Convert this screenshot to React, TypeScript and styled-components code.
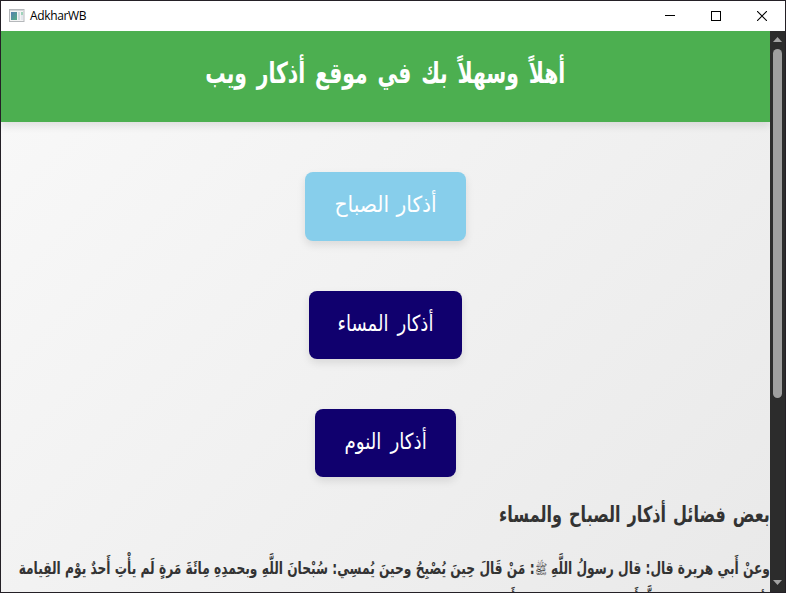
import React from "react";
import styled, { createGlobalStyle } from "styled-components";

const GlobalStyle = createGlobalStyle`
  * { box-sizing: border-box; }
  body { margin: 0; overflow: hidden; }
`;

const Window = styled.div`
  width: 786px;
  height: 593px;
  display: flex;
  flex-direction: column;
  border: 1px solid #242026;
  overflow: hidden;
  background: #fff;
`;

const TitleBar = styled.div`
  height: 30px;
  flex: none;
  display: flex;
  align-items: center;
  justify-content: space-between;
  background: #fff;
`;

const AppName = styled.div`
  display: flex;
  align-items: center;
  gap: 5px;
  padding-left: 8px;
  font: 12px/16px "Open Sans", "Noto Sans", sans-serif;
  letter-spacing: -0.35px;
  color: #000;
`;

const Controls = styled.div`
  display: flex;
  height: 30px;
`;

const Control = styled.div`
  width: 46px;
  display: flex;
  align-items: center;
  justify-content: center;
`;

const Body = styled.div`
  flex: 1;
  min-height: 0;
  display: flex;
`;

const Page = styled.main`
  width: 769px;
  flex: none;
  overflow: hidden;
  color: #333;
  font-family: "DejaVu Sans", sans-serif;
  background: linear-gradient(135deg, #f9f9f9, #e9e9e9);
`;

const Header = styled.header`
  height: 91px;
  display: flex;
  justify-content: center;
  padding-top: 20px;
  background: #4caf50;
  color: #fff;
  box-shadow: 0 4px 8px rgba(0, 0, 0, 0.1);
`;

const Line = styled.span<{ $size: number; $stretch?: number; $origin?: string; $gap?: number }>`
  display: block;
  width: max-content;
  font-size: ${(p) => p.$size}px;
  line-height: 44px;
  white-space: nowrap;
  word-spacing: ${(p) => p.$gap ?? 0}px;
  transform: scaleX(${(p) => p.$stretch ?? 1});
  transform-origin: ${(p) => p.$origin ?? "center"};
`;

const Title = styled.h1`
  margin: 0;
  font-weight: 700;
`;

const Nav = styled.nav`
  display: flex;
  flex-direction: column;
  align-items: center;
  gap: 50px;
  padding-top: 50px;
`;

const NavButton = styled.a<{ $width: number; $height: number; $color: string }>`
  width: ${(p) => p.$width}px;
  height: ${(p) => p.$height}px;
  display: flex;
  justify-content: center;
  padding-top: 11px;
  border-radius: 8px;
  background: ${(p) => p.$color};
  color: #fff;
  box-shadow: 0 4px 8px rgba(0, 0, 0, 0.1);
`;

const Section = styled.section`
  padding-top: 16px;
`;

const Heading = styled.h2`
  margin: 0;
  font-weight: 700;
`;

const Hadith = styled.p`
  margin: 15px 0 0;
  font-weight: 700;
`;

const HadithLine = styled(Line)`
  line-height: 32px;
`;

const Honorific = styled.span`
  font-size: 14px;
  font-weight: 400;
  line-height: 1;
`;

const ScrollBar = styled.div`
  width: 15px;
  flex: none;
  display: flex;
  flex-direction: column;
  align-items: center;
  justify-content: space-between;
  background: #2c2c2c;
`;

const Thumb = styled.div`
  width: 9px;
  height: 349px;
  margin-bottom: auto;
  border-radius: 5px;
  background: #9f9f9f;
`;

const Arrow = styled.svg`
  flex: none;
  display: block;
`;

export default function App() {
  return (
    <Window>
      <GlobalStyle />
      <TitleBar>
        <AppName>
          <svg width="16" height="16" viewBox="0 0 16 16">
            <defs>
              <linearGradient id="pane" x1="0" y1="0" x2="1" y2="1">
                <stop offset="0" stopColor="#547fb0" />
                <stop offset="1" stopColor="#55ad83" />
              </linearGradient>
            </defs>
            <rect x="0.5" y="1.5" width="14.5" height="12" fill="#f4f4f4" stroke="#b5b8bb" />
            <path d="M1 2.5h14" stroke="#d2d5d7" />
            <rect x="2" y="4" width="6" height="8" fill="url(#pane)" />
            <rect x="9" y="4" width="2" height="8" fill="#d3dce2" />
            <rect x="12" y="4" width="2" height="3" fill="#9fd3ba" />
            <rect x="12" y="7" width="2" height="5" fill="#e3e6ec" />
          </svg>
          <span>AdkharWB</span>
        </AppName>
        <Controls>
          <Control>
            <svg width="10" height="10" shapeRendering="crispEdges"><path d="M0 4.5h10" stroke="#000" /></svg>
          </Control>
          <Control>
            <svg width="10" height="10" shapeRendering="crispEdges"><rect x="0.5" y="0.5" width="9" height="9" fill="none" stroke="#000" /></svg>
          </Control>
          <Control>
            <svg width="10" height="10"><path d="M0 0L10 10M10 0L0 10" stroke="#000" strokeWidth="1.1" /></svg>
          </Control>
        </Controls>
      </TitleBar>
      <Body>
        <Page dir="rtl" lang="ar">
          <Header>
            <Title><Line $size={29} $stretch={0.7} $gap={4}>أهلاً وسهلاً بك في موقع أذكار ويب</Line></Title>
          </Header>
          <Nav>
            <NavButton $width={161} $height={69} $color="#87ceeb"><Line $size={22} $stretch={0.92} $gap={1}>أذكار الصباح</Line></NavButton>
            <NavButton $width={153} $height={68} $color="#10006e"><Line $size={22} $stretch={0.82} $gap={4}>أذكار المساء</Line></NavButton>
            <NavButton $width={141} $height={68} $color="#10006e"><Line $size={22} $stretch={0.83} $gap={4}>أذكار النوم</Line></NavButton>
          </Nav>
          <Section>
            <Heading><Line $size={22} $stretch={0.73} $gap={2} $origin="right">بعض فضائل أذكار الصباح والمساء</Line></Heading>
            <Hadith>
              <HadithLine $size={17} $stretch={0.719} $origin="right">وعنْ أَبي هريرة قال: قال رسولُ اللَّهِ <Honorific>ﷺ</Honorific>: مَنْ قَالَ حِينَ يُصْبِحُ وحينَ يُمسِي: سُبْحانَ اللَّهِ وبحمدِهِ مِائَةَ مَرةٍ لَم يأْتِ أَحدٌ يوْم القِيامة</HadithLine>
              <HadithLine $size={17} $stretch={0.719} $origin="right">بِأفضَلَ مِما جاءَ بِهِ، إِلَّا أَحدٌ قال مِثلَ مَا قال أَوْ زَادَ</HadithLine>
            </Hadith>
          </Section>
        </Page>
        <ScrollBar>
          <Arrow width="15" height="18"><path d="M3 11L7.5 6L12 11Z" fill="#a3a3a3" /></Arrow>
          <Thumb />
          <Arrow width="15" height="18"><path d="M3 6L7.5 11L12 6Z" fill="#a3a3a3" /></Arrow>
        </ScrollBar>
      </Body>
    </Window>
  );
}
